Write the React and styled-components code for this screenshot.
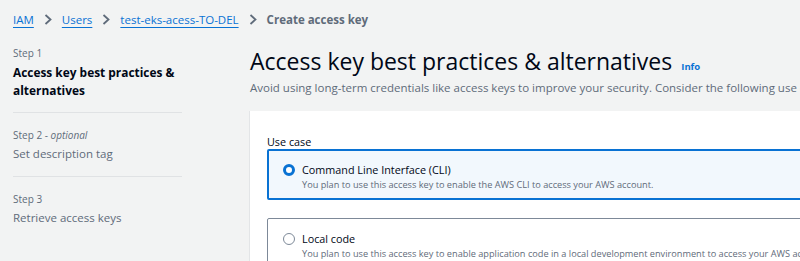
import React from 'react';
import styled, { createGlobalStyle } from 'styled-components';

const GlobalStyle = createGlobalStyle`
  html, body {
    margin: 0;
    padding: 0;
    background: #f2f3f3;
    overflow: hidden;
  }
  body {
    font-family: 'Open Sans', 'Noto Sans', sans-serif;
    color: #000716;
  }
`;

const steps = [
  { label: 'Step 1', title: 'Access key best practices & alternatives', active: true },
  { label: 'Step 2', optional: true, title: 'Set description tag' },
  { label: 'Step 3', title: 'Retrieve access keys' },
];

const crumbs = ['IAM', 'Users', 'test-eks-acess-TO-DEL'];

const options = [
  {
    title: 'Command Line Interface (CLI)',
    desc: 'You plan to use this access key to enable the AWS CLI to access your AWS account.',
    selected: true,
  },
  {
    title: 'Local code',
    desc: 'You plan to use this access key to enable application code in a local development environment to access your AWS account.',
  },
];

function Chevron() {
  return (
    <ChevronIcon width='8' height='11' viewBox='0 0 8 11'>
      <polyline points='1.5,1 6.5,5.5 1.5,10' fill='none' stroke='#5f6b7a' strokeWidth='1.8' />
    </ChevronIcon>
  );
}

export default function App() {
  return (
    <Page>
      <GlobalStyle />
      <Breadcrumbs>
        {crumbs.map((c) => (
          <React.Fragment key={c}>
            <Crumb href='#'>{c}</Crumb>
            <Chevron />
          </React.Fragment>
        ))}
        <Current>Create access key</Current>
      </Breadcrumbs>
      <Layout>
        <Nav>
          {steps.map((s) => (
            <Step key={s.label}>
              <StepLabel>
                {s.label}
                {s.optional && (
                  <>
                    {' - '}
                    <i>optional</i>
                  </>
                )}
              </StepLabel>
              <StepTitle active={s.active}>{s.title}</StepTitle>
            </Step>
          ))}
        </Nav>
        <Main>
          <Header>
            <Title>Access key best practices &amp; alternatives</Title>
            <InfoLink href='#'>Info</InfoLink>
          </Header>
          <Description>
            Avoid using long-term credentials like access keys to improve your security. Consider the following use cases and alternatives.
          </Description>
          <Panel>
            <FieldLabel>Use case</FieldLabel>
            <Tiles>
              {options.map((o) => (
                <Tile key={o.title} selected={o.selected}>
                  <Radio selected={o.selected} />
                  <TileText>
                    <TileTitle>{o.title}</TileTitle>
                    <TileDesc>{o.desc}</TileDesc>
                  </TileText>
                </Tile>
              ))}
            </Tiles>
          </Panel>
        </Main>
      </Layout>
    </Page>
  );
}

const Page = styled.div`
  width: 800px;
  height: 261px;
  overflow: hidden;
`;

const Breadcrumbs = styled.nav`
  display: flex;
  align-items: center;
  gap: 10px;
  height: 38px;
  padding: 0 13px;
  font-size: 11.5px;
  white-space: nowrap;
`;

const Crumb = styled.a`
  color: #0972d3;
  text-decoration: underline;
  text-underline-offset: 3px;
`;

const ChevronIcon = styled.svg`
  flex-shrink: 0;
`;

const Current = styled.span`
  color: #5f6b7a;
  font-weight: 700;
`;

const Layout = styled.div`
  display: grid;
  grid-template-columns: 249px 720px;
`;

const Nav = styled.div`
  width: 169px;
  padding: 7px 0 0 13px;
`;

const Step = styled.div`
  padding: 14px 0 13px;
  &:first-child {
    padding-top: 0;
  }
  & + & {
    border-top: 1px solid #e0e2e4;
  }
`;

const StepLabel = styled.div`
  font-size: 10px;
  line-height: 16px;
  color: #5f6b7a;
  margin-bottom: 2px;
  i {
    font-style: italic;
  }
`;

const StepTitle = styled.div`
  font-size: ${(p) => (p.active ? '11.9px' : '11.5px')};
  line-height: 18px;
  font-weight: ${(p) => (p.active ? 700 : 400)};
  color: ${(p) => (p.active ? '#000716' : '#5f6b7a')};
`;

const Main = styled.div`
  padding-left: 1px;
`;

const Header = styled.div`
  display: flex;
  align-items: baseline;
  gap: 9px;
  margin-top: 8px;
`;

const Title = styled.h1`
  margin: 0;
  font-size: 23px;
  line-height: 30px;
  font-weight: 400;
  color: #000716;
  white-space: nowrap;
`;

const InfoLink = styled.a`
  font-size: 9.5px;
  font-weight: 700;
  color: #0972d3;
  text-decoration: none;
`;

const Description = styled.p`
  margin: 4px 0 0;
  font-size: 11.5px;
  line-height: 16px;
  color: #5f6b7a;
  white-space: nowrap;
`;

const Panel = styled.section`
  margin: 15px 0 0 -1px;
  background: #fff;
  border-left: 1px solid #e3e5e7;
  padding: 25px 0 0 17px;
  height: 200px;
`;

const FieldLabel = styled.div`
  font-size: 10.8px;
  line-height: 12px;
  color: #000716;
  margin-bottom: 1px;
`;

const Tiles = styled.div`
  display: flex;
  flex-direction: column;
  gap: 18px;
`;

const Tile = styled.label`
  display: flex;
  align-items: flex-start;
  gap: 7px;
  padding: ${(p) => (p.selected ? '11px 12px 5px 14px' : '12px 13px 6px 15px')};
  border: ${(p) => (p.selected ? '2px solid #0972d3' : '1px solid #7d8998')};
  border-radius: 2px;
  background: ${(p) => (p.selected ? '#f2f8fd' : '#fff')};
`;

const Radio = styled.span`
  flex-shrink: 0;
  box-sizing: border-box;
  width: 12px;
  height: 12px;
  margin-top: 2px;
  border-radius: 50%;
  background: #fff;
  border: ${(p) => (p.selected ? '3.5px solid #0972d3' : '1.2px solid #7d8998')};
`;

const TileText = styled.div`
  display: flex;
  flex-direction: column;
`;

const TileTitle = styled.div`
  font-size: 10.8px;
  line-height: 15px;
  color: #000716;
  white-space: nowrap;
`;

const TileDesc = styled.div`
  font-size: 9.2px;
  line-height: 16px;
  color: #5f6b7a;
  white-space: nowrap;
`;
